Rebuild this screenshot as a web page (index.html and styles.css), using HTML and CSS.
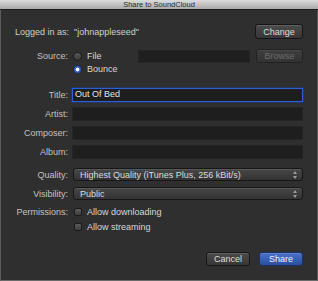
FILE: index.html
```html
<!DOCTYPE html>
<html>
<head>
<meta charset="utf-8">
<link rel="stylesheet" href="styles.css">
</head>
<body>
<div class="window">
  <div class="titlebar">Share to SoundCloud</div>
  <div class="content">
    <div class="login-row">
      <span class="login-text">Logged in as:&nbsp; "johnappleseed"</span>
      <span class="btn btn-change">Change</span>
    </div>

    <div class="form source-form">
      <div class="label">Source:</div>
      <div class="source-line">
        <span class="radio"></span><span class="opt-text">File</span>
        <span class="path-field"></span>
        <span class="btn btn-browse">Browse</span>
      </div>
      <div></div>
      <div class="bounce-line">
        <span class="radio radio-on"></span><span class="opt-text">Bounce</span>
      </div>
    </div>

    <div class="form fields">
      <div class="label">Title:</div>
      <div class="field field-focus">Out Of Bed</div>
      <div class="label">Artist:</div>
      <div class="field"></div>
      <div class="label">Composer:</div>
      <div class="field"></div>
      <div class="label">Album:</div>
      <div class="field"></div>
    </div>

    <div class="form selects">
      <div class="label">Quality:</div>
      <div class="select"><span>Highest Quality (iTunes Plus, 256 kBit/s)</span><span class="arrows"></span></div>
      <div class="label">Visibility:</div>
      <div class="select"><span>Public</span><span class="arrows"></span></div>
    </div>

    <div class="form perms">
      <div class="label">Permissions:</div>
      <div class="check-line"><span class="checkbox"></span><span class="opt-text">Allow downloading</span></div>
      <div></div>
      <div class="check-line"><span class="checkbox"></span><span class="opt-text">Allow streaming</span></div>
    </div>

    <div class="actions">
      <span class="btn btn-cancel">Cancel</span>
      <span class="btn btn-share">Share</span>
    </div>
  </div>
</div>
</body>
</html>
```
FILE: styles.css
```css
* { box-sizing: border-box; }
html, body { margin: 0; padding: 0; background: #6e6e6e; }
body {
  font-family: "Liberation Sans", Arial, sans-serif;
  font-size: 9px;
  color: #d6d6d6;
}
.window {
  width: 318px;
  height: 281px;
  background: #2f2f2f;
  border-left: 1px solid #5c5c5c;
  border-right: 1px solid #5c5c5c;
  border-bottom: 1px solid #6a6a6a;
  display: flex;
  flex-direction: column;
}
.titlebar {
  height: 10px;
  line-height: 10px;
  font-size: 7.5px;
  text-align: center;
  color: #2a2a2a;
  background: linear-gradient(#dcdcdc, #a9a9a9);
  border-bottom: 1px solid #1e1e1e;
  margin: 0 -1px;
}
.content {
  padding: 0 14px 0 0;
  display: flex;
  flex-direction: column;
}
.login-row {
  margin-top: 14px;
  height: 15px;
  display: flex;
  align-items: center;
  justify-content: space-between;
  padding-left: 14px;
}
.login-text { color: #cfcfcf; }
.btn {
  display: flex;
  align-items: center;
  justify-content: center;
  height: 14px;
  border-radius: 3px;
  border: 1px solid #161616;
  background: linear-gradient(#4b4b4b, #363636);
  box-shadow: inset 0 1px 0 rgba(255,255,255,0.12);
  color: #dedede;
  font-size: 9px;
}
.btn-change { width: 48px; height: 15px; }
.form {
  display: grid;
  grid-template-columns: 67px 1fr;
  column-gap: 4px;
  align-items: center;
}
.label {
  text-align: right;
  color: #c2c2c2;
}
.source-form { margin-top: 10px; }
.source-line {
  display: flex;
  align-items: center;
  height: 14px;
  padding-left: 1px;
}
.bounce-line {
  display: flex;
  align-items: center;
  height: 12px;
  padding-left: 1px;
}
.radio {
  width: 9px;
  height: 9px;
  border-radius: 50%;
  background: linear-gradient(#5a5a5a, #3a3a3a);
  border: 1px solid #1c1c1c;
  flex: none;
}
.radio-on {
  background: radial-gradient(circle, #ffffff 0 1.6px, #3b67c9 2.2px, #2a52a8 100%);
  border-color: #1a2c5a;
}
.opt-text {
  margin-left: 5px;
  color: #d8d8d8;
}
.path-field {
  width: 112px;
  height: 13px;
  margin-left: 36px;
  background: #1f1f1f;
  border: 1px solid #262626;
}
.btn-browse {
  width: 47px;
  margin-left: auto;
  color: #6c6c6c;
  background: linear-gradient(#3e3e3e, #333333);
  border-color: #222;
  box-shadow: inset 0 1px 0 rgba(255,255,255,0.06);
}
.fields {
  margin-top: 13px;
  row-gap: 5px;
}
.field {
  height: 14px;
  background: #1e1e1e;
  border: 1px solid #252525;
  padding-left: 3px;
  line-height: 12px;
  color: #e4e4e4;
}
.field-focus {
  border: 1.5px solid #2f5fd0;
  box-shadow: 0 0 0 0.5px #1d3f9a;
  line-height: 11px;
  padding-left: 2px;
}
.selects {
  margin-top: 9px;
  row-gap: 6px;
}
.select {
  height: 13px;
  border-radius: 3px;
  border: 1px solid #171717;
  background: linear-gradient(#474747, #333333);
  box-shadow: inset 0 1px 0 rgba(255,255,255,0.1);
  display: flex;
  align-items: center;
  justify-content: space-between;
  padding: 0 4px 0 6px;
  margin-left: 1px;
  color: #dcdcdc;
}
.arrows {
  width: 5px;
  height: 8px;
  position: relative;
}
.arrows::before, .arrows::after {
  content: "";
  position: absolute;
  left: 0;
  border-left: 2.5px solid transparent;
  border-right: 2.5px solid transparent;
}
.arrows::before { top: 0; border-bottom: 3px solid #9c9c9c; }
.arrows::after { bottom: 0; border-top: 3px solid #9c9c9c; }
.perms {
  margin-top: 6px;
  row-gap: 3px;
}
.check-line {
  display: flex;
  align-items: center;
  height: 12px;
  padding-left: 2px;
}
.checkbox {
  width: 8px;
  height: 8px;
  border-radius: 2px;
  border: 1px solid #1a1a1a;
  background: linear-gradient(#5c5c5c, #3d3d3d);
  flex: none;
}
.actions {
  margin-top: 19px;
  display: flex;
  justify-content: flex-end;
  gap: 9px;
}
.btn-cancel { width: 44px; }
.btn-share {
  width: 44px;
  background: linear-gradient(#4a72c8, #2a4f9e);
  border-color: #1a2f66;
  color: #eef2fb;
}
```
